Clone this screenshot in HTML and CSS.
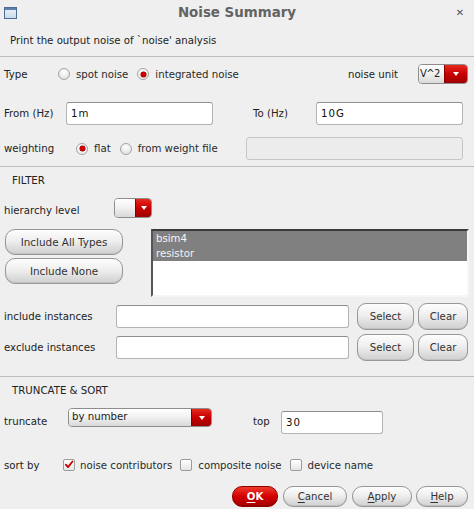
FILE: index.html
```html
<!DOCTYPE html>
<html>
<head>
<meta charset="utf-8">
<title>Noise Summary</title>
<link rel="stylesheet" href="styles.css">
</head>
<body>
<div class="win">
  <div class="titlebar">
    <svg class="wicon" viewBox="0 0 13 12" width="13" height="12">
      <defs>
        <linearGradient id="wg" x1="0" y1="0" x2="0" y2="1">
          <stop offset="0" stop-color="#eef4fb"/>
          <stop offset="1" stop-color="#c9d8e8"/>
        </linearGradient>
      </defs>
      <rect x="0.5" y="0.5" width="12" height="11" fill="url(#wg)" stroke="#4d6b93"/>
      <rect x="1" y="1" width="11" height="2" fill="#5d7fae"/>
    </svg>
    <div class="title">Noise Summary</div>
    <div class="close">✕</div>
  </div>

  <div class="desc">Print the output noise of `noise' analysis</div>

  <div class="sec sec-main">
    <div class="row row-type">
      <span class="lbl lbl-type">Type</span>
      <span class="radio"></span><span class="opt">spot noise</span>
      <span class="radio radio-on radio-next"></span><span class="opt">integrated noise</span>
      <span class="unit-lbl">noise unit</span>
      <span class="combo combo-unit"><span class="combo-val">V^2</span><span class="combo-btn"></span></span>
    </div>
    <div class="row row-freq">
      <span class="lbl lbl-from">From (Hz)</span>
      <span class="field field-freq">1m</span>
      <span class="lbl lbl-to">To (Hz)</span>
      <span class="field field-freq">10G</span>
    </div>
    <div class="row row-weight">
      <span class="lbl lbl-weight">weighting</span>
      <span class="radio radio-on"></span><span class="opt">flat</span>
      <span class="radio radio-next"></span><span class="opt">from weight file</span>
      <span class="field field-disabled"></span>
    </div>
  </div>

  <div class="sec sec-filter">
    <div class="sec-title">FILTER</div>
    <div class="row row-hier">
      <span class="lbl lbl-hier">hierarchy level</span>
      <span class="combo combo-hier"><span class="combo-val"></span><span class="combo-btn"></span></span>
    </div>
    <div class="types">
      <div class="types-btns">
        <div class="btn btn-type">Include All Types</div>
        <div class="btn btn-type">Include None</div>
      </div>
      <div class="list">
        <div class="item">bsim4</div>
        <div class="item">resistor</div>
      </div>
    </div>
    <div class="row row-inst">
      <span class="lbl lbl-inst">include instances</span>
      <span class="field field-inst"></span>
      <div class="btn btn-select">Select</div>
      <div class="btn btn-clear">Clear</div>
    </div>
    <div class="row row-inst row-inst2">
      <span class="lbl lbl-inst">exclude instances</span>
      <span class="field field-inst"></span>
      <div class="btn btn-select">Select</div>
      <div class="btn btn-clear">Clear</div>
    </div>
  </div>

  <div class="sec sec-trunc">
    <div class="sec-title">TRUNCATE &amp; SORT</div>
    <div class="row row-trunc">
      <span class="lbl lbl-trunc">truncate</span>
      <span class="combo combo-trunc"><span class="combo-val">by number</span><span class="combo-btn"></span></span>
      <span class="lbl lbl-top">top</span>
      <span class="field field-top">30</span>
    </div>
    <div class="row row-sort">
      <span class="lbl lbl-sort">sort by</span>
      <span class="check check-on"><svg viewBox="0 0 12 12" width="12" height="12"><path d="M2.2 5.6 L4.8 8.6 L10.2 1.8" fill="none" stroke="#c40000" stroke-width="2.1" stroke-linecap="round" stroke-linejoin="round"/></svg></span><span class="opt">noise contributors</span>
      <span class="check check-next"></span><span class="opt">composite noise</span>
      <span class="check check-next"></span><span class="opt">device name</span>
    </div>
    <div class="actions">
      <div class="btn btn-ok"><u>O</u>K</div>
      <div class="btn btn-cancel"><u>C</u>ancel</div>
      <div class="btn btn-apply"><u>A</u>pply</div>
      <div class="btn btn-help"><u>H</u>elp</div>
    </div>
  </div>
</div>
</body>
</html>
```
FILE: styles.css
```css
* { box-sizing: border-box; margin: 0; padding: 0; }
html, body { width: 474px; height: 509px; overflow: hidden; background: #efefef; }
body { font-family: "DejaVu Sans", sans-serif; font-size: 10.2px; color: #262626; }

.titlebar { height: 24px; display: flex; align-items: center; padding: 0 9px 0 4px; }
.wicon { flex: none; display: block; margin-top: 1px; }
.title { flex: 1; text-align: center; font-weight: bold; font-size: 13.4px; color: #636363; padding-left: 2px; }
.close { flex: none; width: 10px; font-size: 10px; font-weight: bold; color: #555; text-align: center; }

.desc { height: 32px; line-height: 33px; padding-left: 10px; font-size: 10.2px; color: #222; }

.sec { border-top: 1px solid #bdbdbd; padding-left: 4px; }
.sec-main { padding-top: 7px; padding-bottom: 6px; }
.sec-filter { padding-bottom: 15px; }
.sec-title { margin-top: 7px; height: 14px; line-height: 14px; padding-left: 8px; color: #222; }

.row { display: flex; align-items: center; }
.lbl { flex: none; white-space: nowrap; color: #222; }
.opt { white-space: nowrap; color: #2a2a2a; }

/* radios */
.radio { flex: none; width: 12px; height: 12px; border-radius: 50%; border: 1px solid #a4a4a4;
  background: radial-gradient(circle at 50% 30%, #ffffff, #e2e2e2 80%); margin-right: 6px;
  display: flex; align-items: center; justify-content: center; }
.radio-on { background: radial-gradient(circle at 50% 30%, #ffffff, #ececec 80%); }
.radio-on::after { content: ""; width: 5px; height: 5px; border-radius: 50%; background: #d20000; box-shadow: 0 0 0 0.5px #8a0000; }
.radio-next { margin-left: 9px; }

/* checkbox */
.check { flex: none; width: 12px; height: 12px; border: 1px solid #9c9c9c; border-radius: 2px;
  background: linear-gradient(#ffffff, #e6e6e6); margin-right: 5px; display: flex; align-items: center; justify-content: center; overflow: visible; }
.check svg { display: block; margin-top: -1px; }
.check-next { margin-left: 8px; margin-right: 6px; }

/* combos */
.combo { flex: none; display: flex; border: 1px solid #8d8d8d; border-radius: 4px; overflow: hidden; }
.combo-val { flex: 1; background: linear-gradient(#ffffff, #f2f2f2 45%, #d9d9d9); padding-left: 2px; line-height: 17px; color: #222; white-space: nowrap; overflow: hidden; }
.combo-btn { flex: none; width: 20px; background: linear-gradient(#e62a1e, #c80000 50%, #9e0000);
  display: flex; align-items: center; justify-content: center; border-left: 1px solid #8a0000; }
.combo-btn::after { content: ""; width: 0; height: 0; border-left: 3.5px solid transparent; border-right: 3.5px solid transparent; border-top: 4px solid #fff; }

/* fields */
.field { flex: none; background: #fff; border: 1px solid #b4b4b4; border-top-color: #8e8e8e; border-radius: 3px;
  height: 23px; line-height: 21px; padding-left: 4px; color: #111; letter-spacing: 1px; }
.field-disabled { background: #ececec; border-color: #c6c6c6; margin-left: auto; width: 217px; }

/* buttons */
.btn { flex: none; display: flex; align-items: center; justify-content: center; white-space: nowrap;
  border: 1px solid #979797; border-radius: 9px; color: #333;
  background: linear-gradient(#fdfdfd, #efefef 45%, #dadada 80%, #d0d0d0);
  box-shadow: inset 0 -1px 0 #c2c2c2; }

/* main section rows */
.row-type { height: 20px; padding-right: 6px; }
.lbl-type { width: 54px; }
.unit-lbl { margin-left: auto; margin-right: 20px; color: #222; }
.combo-unit { width: 50px; height: 20px; }
.combo-unit .combo-val { padding-left: 1px; letter-spacing: -0.6px; font-size: 10px; }
.combo-unit .combo-btn { width: 23px; }

.row-freq { height: 23px; margin-top: 18px; }
.lbl-from { width: 62px; }
.lbl-to { width: 63px; margin-left: 40px; }
.field-freq { width: 147px; }

.row-weight { height: 23px; margin-top: 12px; padding-right: 11px; }
.lbl-weight { width: 72px; }

/* filter rows */
.row-hier { height: 20px; margin-top: 10px; }
.lbl-hier { width: 110px; padding-top: 6px; line-height: 12px; }
.combo-hier { width: 38px; height: 20px; }
.combo-hier .combo-btn { width: 16px; }

.types { display: flex; margin-top: 11px; height: 68px; }
.types-btns { width: 118px; margin-left: 1px; display: flex; flex-direction: column; gap: 3px; }
.btn-type { height: 26px; border-radius: 10px; font-size: 10.4px; }
.list { width: 318px; margin-left: 28px; background: #fff; border-style: solid; border-width: 2px;
  border-color: #3a3a3a #f6f6f6 #f6f6f6 #555; }
.item { height: 15px; line-height: 15px; background: #808080; color: #f4f4f4; padding-left: 3px; }

.row-inst { height: 27px; margin-top: 6px; }
.row-inst2 { margin-top: 4px; }
.lbl-inst { width: 112px; }
.field-inst { width: 233px; }
.btn-select { width: 57px; height: 27px; margin-left: 8px; }
.btn-clear { width: 50px; height: 27px; margin-left: 4px; }

/* truncate rows */
.row-trunc { height: 26px; margin-top: 10px; }
.lbl-trunc { width: 64px; }
.combo-trunc { width: 144px; height: 19px; align-self: flex-start; }
.combo-trunc .combo-val { line-height: 16px; padding-left: 3px; }
.lbl-top { width: 28px; margin-left: 41px; }
.field-top { width: 102px; align-self: flex-end; }

.row-sort { height: 14px; margin-top: 24px; }
.lbl-sort { width: 59px; }

.actions { display: flex; justify-content: flex-end; margin-top: 14px; padding-right: 6px; height: 21px; }
.actions .btn { height: 21px; border-radius: 10px; }
.actions u { text-decoration-thickness: 1px; text-underline-offset: 2px; }
.btn-ok { width: 46px; background: linear-gradient(#f0392b, #d40000 50%, #a60000); border-color: #8c0000;
  color: #fff; font-weight: bold; box-shadow: inset 0 -1px 0 #900; }
.btn-cancel { width: 64px; margin-left: 5px; }
.btn-apply { width: 60px; margin-left: 5px; }
.btn-help { width: 52px; margin-left: 4px; }
```
